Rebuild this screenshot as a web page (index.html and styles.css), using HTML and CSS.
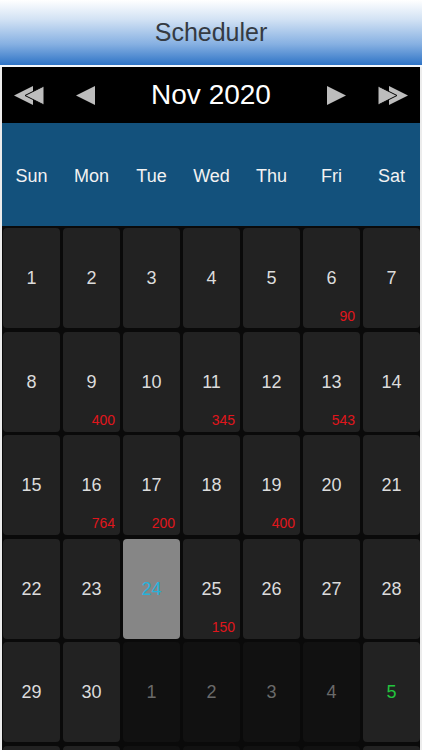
FILE: index.html
```html
<!DOCTYPE html>
<html>
<head>
<meta charset="utf-8">
<link rel="stylesheet" href="styles.css">
</head>
<body>
<header class="topbar"><h1 class="title">Scheduler</h1></header>
<div class="calendar">
  <div class="nav">
    <button class="navbtn" aria-label="Previous year">
      <svg width="31" height="19" viewBox="0 0 31 19"><polygon points="0,9.5 19,0 19,19" fill="#bdbdbd"/><polygon points="11,9.5 30,0 30,19" fill="#bdbdbd" stroke="#000" stroke-width="1"/></svg>
    </button>
    <button class="navbtn" aria-label="Previous month">
      <svg width="20" height="19" viewBox="0 0 20 19"><polygon points="0,9.5 19,0 19,19" fill="#bdbdbd"/></svg>
    </button>
    <div class="month">Nov 2020</div>
    <button class="navbtn" aria-label="Next month">
      <svg width="20" height="19" viewBox="0 0 20 19"><polygon points="20,9.5 1,0 1,19" fill="#bdbdbd"/></svg>
    </button>
    <button class="navbtn" aria-label="Next year">
      <svg width="31" height="19" viewBox="0 0 31 19"><polygon points="31,9.5 12,0 12,19" fill="#bdbdbd"/><polygon points="20,9.5 1,0 1,19" fill="#bdbdbd" stroke="#000" stroke-width="1"/></svg>
    </button>
  </div>
  <div class="weekdays">
    <span>Sun</span><span>Mon</span><span>Tue</span><span>Wed</span><span>Thu</span><span>Fri</span><span>Sat</span>
  </div>
  <div class="grid">
    <div class="cell"><span class="num">1</span></div>
    <div class="cell"><span class="num">2</span></div>
    <div class="cell"><span class="num">3</span></div>
    <div class="cell"><span class="num">4</span></div>
    <div class="cell"><span class="num">5</span></div>
    <div class="cell"><span class="num">6</span><span class="count">90</span></div>
    <div class="cell"><span class="num">7</span></div>

    <div class="cell"><span class="num">8</span></div>
    <div class="cell"><span class="num">9</span><span class="count">400</span></div>
    <div class="cell"><span class="num">10</span></div>
    <div class="cell"><span class="num">11</span><span class="count">345</span></div>
    <div class="cell"><span class="num">12</span></div>
    <div class="cell"><span class="num">13</span><span class="count">543</span></div>
    <div class="cell"><span class="num">14</span></div>

    <div class="cell"><span class="num">15</span></div>
    <div class="cell"><span class="num">16</span><span class="count">764</span></div>
    <div class="cell"><span class="num">17</span><span class="count">200</span></div>
    <div class="cell"><span class="num">18</span></div>
    <div class="cell"><span class="num">19</span><span class="count">400</span></div>
    <div class="cell"><span class="num">20</span></div>
    <div class="cell"><span class="num">21</span></div>

    <div class="cell"><span class="num">22</span></div>
    <div class="cell"><span class="num">23</span></div>
    <div class="cell today"><span class="num">24</span></div>
    <div class="cell"><span class="num">25</span><span class="count">150</span></div>
    <div class="cell"><span class="num">26</span></div>
    <div class="cell"><span class="num">27</span></div>
    <div class="cell"><span class="num">28</span></div>

    <div class="cell"><span class="num">29</span></div>
    <div class="cell"><span class="num">30</span></div>
    <div class="cell other"><span class="num">1</span></div>
    <div class="cell other"><span class="num">2</span></div>
    <div class="cell other"><span class="num">3</span></div>
    <div class="cell other"><span class="num">4</span></div>
    <div class="cell weekend"><span class="num">5</span></div>

    <div class="cell"></div>
    <div class="cell"></div>
    <div class="cell other"></div>
    <div class="cell other"></div>
    <div class="cell other"></div>
    <div class="cell other"></div>
    <div class="cell"></div>
  </div>
</div>
</body>
</html>
```
FILE: styles.css
```css
html, body {
  margin: 0;
  padding: 0;
  background: #ececec;
  font-family: "Liberation Sans", Arial, sans-serif;
  overflow: hidden;
}
.topbar {
  height: 65px;
  background: linear-gradient(to bottom, #ffffff 0%, #d2e2f4 30%, #86b0e2 68%, #2f74c6 100%);
  border-bottom: 2px solid #f4f8fc;
  display: flex;
  align-items: center;
  justify-content: center;
}
.title {
  margin: 0;
  font-weight: normal;
  font-size: 25px;
  color: #343a42;
  padding-bottom: 1px;
}
.calendar {
  margin: 0 2px;
  background: #0a0a0a;
}
.nav {
  height: 56px;
  background: #000;
  display: flex;
  align-items: center;
  padding: 0 12px;
}
.navbtn {
  background: none;
  border: none;
  padding: 0;
  margin: 0;
  display: flex;
  align-items: center;
  height: 19px;
}
.navbtn:nth-child(1) { margin-right: 31px; }
.navbtn:nth-child(4) { margin-right: 31px; }
.navbtn svg { display: block; }
.month {
  flex: 1;
  text-align: center;
  color: #fff;
  font-size: 28px;
}
.weekdays {
  height: 103px;
  box-sizing: border-box;
  padding-top: 3px;
  background: #13517c;
  display: grid;
  grid-template-columns: repeat(7, 57px);
  column-gap: 3px;
  padding-left: 1px;
  align-items: center;
}
.weekdays span {
  text-align: center;
  color: #f2f2f2;
  font-size: 18px;
}
.grid {
  display: grid;
  grid-template-columns: repeat(7, 57px);
  grid-auto-rows: 100px;
  column-gap: 3px;
  row-gap: 3.5px;
  padding: 2px 0 0 1px;
}
.cell {
  position: relative;
  background: #222222;
  border-radius: 4px;
  display: flex;
  align-items: center;
  justify-content: center;
}
.num {
  color: #dcdcdc;
  font-size: 18px;
  padding-top: 1px;
}
.count {
  position: absolute;
  right: 5px;
  bottom: 4px;
  color: #e0161c;
  font-size: 14px;
}
.today { background: #868686; }
.today .num { color: #27b2da; }
.other { background: #111111; }
.other .num { color: #6a6a6a; }
.weekend .num { color: #22c43e; }
```
